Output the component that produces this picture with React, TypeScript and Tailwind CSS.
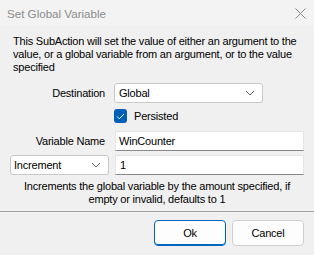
import { useState } from 'react'

function Chevron() {
  return (
    <svg width="10" height="6" viewBox="0 0 10 6" className="shrink-0">
      <path d="M1 1l4 4 4-4" fill="none" stroke="#606060" strokeWidth="1" />
    </svg>
  )
}

export default function App() {
  const [persisted, setPersisted] = useState(true)

  return (
    <div
      className="w-[314px] h-[255px] bg-[#f0f0f0] text-[11px] leading-[13px] tracking-[-0.2px] text-black overflow-hidden flex flex-col"
      style={{ fontFamily: '"Liberation Sans", Arial, sans-serif' }}
    >
      {/* title bar */}
      <div className="h-[26px] bg-[#f3f3f3] flex items-center justify-between pl-[7px] pr-[8px] shrink-0">
        <span className="text-[#8c8c8c] text-[11.6px] tracking-normal">Set Global Variable</span>
        <svg width="11" height="11" viewBox="0 0 11 11">
          <path d="M0.5 0.5l10 10M10.5 0.5l-10 10" stroke="#8a8a8a" strokeWidth="1" />
        </svg>
      </div>

      <p className="mt-[9px] pl-[13px] pr-[12px]">
        This SubAction will set the value of either an argument to the value, or a global
        variable from an argument, or to the value specified
      </p>

      {/* destination */}
      <div className="mt-[9px] flex items-center">
        <span className="w-[105px] text-right">Destination</span>
        <div className="ml-[9px] w-[149px] h-[20px] bg-white border border-[#c8c8c8] rounded-[3px] flex items-center justify-between pl-[4px] pr-[7px]">
          <span>Global</span>
          <Chevron />
        </div>
      </div>

      {/* persisted */}
      <label className="mt-[6px] ml-[114px] flex items-center gap-[7px] h-[14px] cursor-pointer">
        <span
          onClick={() => setPersisted(!persisted)}
          className={`w-[13px] h-[14px] rounded-[3px] flex items-center justify-center ${
            persisted ? 'bg-[#005fb8]' : 'bg-white border border-[#8a8a8a]'
          }`}
        >
          {persisted && (
            <svg width="9" height="7" viewBox="0 0 9 7">
              <path d="M1 3.5l2.3 2.3L8 1" fill="none" stroke="white" strokeWidth="1" />
            </svg>
          )}
        </span>
        <span>Persisted</span>
      </label>

      {/* variable name */}
      <div className="mt-[8px] flex items-center">
        <span className="w-[105px] text-right">Variable Name</span>
        <div className="ml-[10px] w-[189px] h-[20px] bg-white border border-[#e4e4e4] border-b-[#8a8a8a] flex items-center pl-[3px]">
          WinCounter
        </div>
      </div>

      {/* increment */}
      <div className="mt-[4px] flex items-center">
        <div className="ml-[10px] w-[99px] h-[20px] bg-white border border-[#c8c8c8] rounded-[3px] flex items-center justify-between pl-[3px] pr-[7px]">
          <span>Increment</span>
          <Chevron />
        </div>
        <div className="ml-[6px] w-[189px] h-[20px] bg-white border border-[#e4e4e4] border-b-[#8a8a8a] flex items-center pl-[4px]">
          1
        </div>
      </div>

      <p className="mt-[5px] px-[16px] text-center">
        Increments the global variable by the amount specified, if empty or invalid, defaults to 1
      </p>

      <div className="mt-[5px] h-px bg-[#a0a0a0]" />

      {/* buttons */}
      <div className="mt-[8px] flex justify-end gap-[6px] pr-[10px]">
        <button className="w-[72px] h-[26px] bg-[#fdfdfd] border border-[#0067c0] rounded-[4px] shadow-[inset_0_-1px_0_0_#0067c0]">
          Ok
        </button>
        <button className="w-[72px] h-[26px] bg-[#fdfdfd] border border-[#d0d0d0] rounded-[4px]">
          Cancel
        </button>
      </div>
    </div>
  )
}
